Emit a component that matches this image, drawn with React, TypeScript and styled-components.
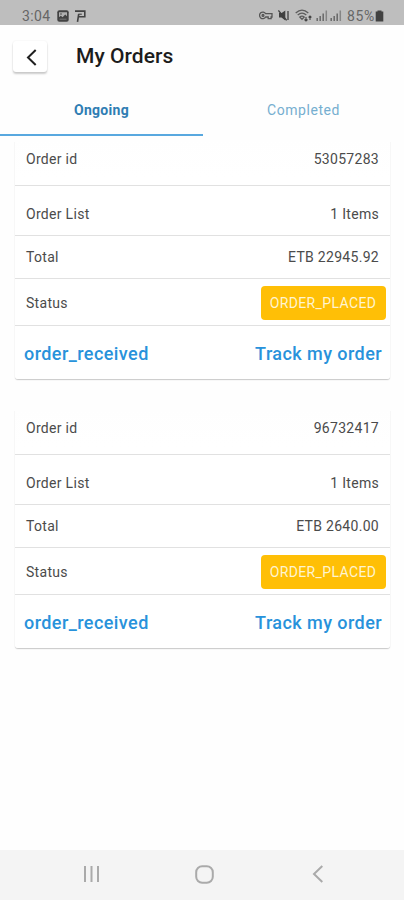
import React from "react";
import styled, { createGlobalStyle } from "styled-components";

const GlobalStyle = createGlobalStyle`
  * { box-sizing: border-box; }
  body { margin: 0; background: #fefefe; font-family: Roboto, sans-serif; }
  button { font-family: inherit; border: 0; background: none; padding: 0; }
`;

const Screen = styled.div`
  width: 404px;
  height: 900px;
  display: flex;
  flex-direction: column;
  background: #fefefe;
  overflow: hidden;
`;

const StatusBar = styled.div`
  height: 25px;
  flex: none;
  display: flex;
  justify-content: space-between;
  padding: 6px 20px 0 22px;
  background: #bebebe;
  color: #666;
  font-size: 14px;
  line-height: 20px;
`;

const StatusGroup = styled.div<{ $spacing: number }>`
  display: flex;
  align-items: center;
  height: 19px;
  letter-spacing: ${(p) => p.$spacing}px;
  svg { display: block; flex: none; }
`;

const Header = styled.header`
  height: 60px;
  flex: none;
  display: flex;
  align-items: flex-start;
  padding: 16px 13px 0;
`;

const BackButton = styled.button`
  width: 34px;
  height: 31px;
  display: flex;
  align-items: center;
  justify-content: center;
  border-radius: 3px;
  background: #fff;
  box-shadow: 0 2px 2px rgba(0, 0, 0, 0.2), 0 0 2px rgba(0, 0, 0, 0.07);
  svg { margin-left: 4px; margin-top: 2px; }
`;

const Title = styled.h1`
  margin: 0 0 0 29px;
  color: #1c1c1c;
  font-size: 21px;
  line-height: 31px;
  font-weight: 500;
  letter-spacing: 0.05px;
`;

const Tabs = styled.nav`
  height: 51px;
  flex: none;
  display: flex;
`;

const Tab = styled.button<{ $active?: boolean }>`
  width: ${(p) => (p.$active ? 203 : 201)}px;
  height: 51px;
  border-bottom: 2.5px solid ${(p) => (p.$active ? "#58a8df" : "transparent")};
  color: ${(p) => (p.$active ? "#2f7db3" : "#76aed0")};
  font-size: 14px;
  line-height: 48px;
  font-weight: ${(p) => (p.$active ? 700 : 400)};
  letter-spacing: ${(p) => (p.$active ? 0.3 : 0.55)}px;
`;

const OrderList = styled.main`
  flex: 1;
  display: flex;
  flex-direction: column;
  gap: 28px;
  padding: 2px 14px 0 15px;
`;

const Card = styled.section`
  height: 241px;
  flex: none;
  display: grid;
  grid-template-rows: 48px 50px 43px 47px 53px;
  background: linear-gradient(#fefefe, #fff 40px);
  border-radius: 3px;
  box-shadow: 0 1px 1px rgba(0, 0, 0, 0.17), 0 1px 2px rgba(0, 0, 0, 0.06);
  clip-path: inset(4px -3px -4px -3px);
`;

const Row = styled.div<{ $top?: number; $bottom?: number }>`
  display: flex;
  justify-content: space-between;
  align-items: center;
  padding: ${(p) => p.$top ?? 0}px 11px ${(p) => p.$bottom ?? 0}px;
  border-bottom: 1px solid #e1e1e1;
  color: #4b4b4b;
  font-size: 14px;
  line-height: 18px;
  letter-spacing: 0.3px;
`;

const Badge = styled.span`
  width: 125px;
  height: 34px;
  margin-right: -6.5px;
  border-radius: 4px;
  background: #ffbf06;
  color: #fff4d0;
  text-align: center;
  line-height: 34px;
  letter-spacing: 0.37px;
`;

const Actions = styled.div`
  display: flex;
  justify-content: space-between;
  align-items: center;
  padding: 2px 8px 0 9px;
`;

const Action = styled.button`
  color: #2892db;
  font-size: 18px;
  line-height: 24px;
  font-weight: 500;
  letter-spacing: 0.43px;
`;

const NavBar = styled.footer`
  height: 50px;
  flex: none;
  display: flex;
  align-items: center;
  padding: 0 80px 2px 83px;
  background: #f4f4f4;
`;

const PictureIcon = () => (
  <svg width="12" height="12" viewBox="0 0 12 12">
    <rect x=".3" y=".3" width="11.4" height="11.4" rx="2" fill="#424242" />
    <path d="M2 2.2h8v4L8.2 4.6 5.6 7.2 3.8 5.7 2 7.2Z" fill="#b0b0b0" />
    <path d="M2.5 9.2h7" stroke="#858585" strokeWidth=".8" />
    <circle cx="4" cy="4" r=".8" fill="#424242" />
  </svg>
);

const ParkingIcon = () => (
  <svg width="11" height="12" viewBox="0 0 11 12" fill="none" stroke="#424242">
    <path d="M0 1.1h9.8v5.7H3.1M2.5 11.8l1.2-7.7" strokeWidth="1.6" />
    <path d="M3.3 4.2h3.5" strokeWidth="1.1" />
  </svg>
);

const KeyIcon = () => (
  <svg width="14" height="9" viewBox="0 0 14 9" fill="none" stroke="#555" strokeWidth="1.3">
    <path d="M6.7 2.7A3.3 3.3 0 1 0 6.7 6h2.5v1.7h2.9V6H13V2.7Z" />
    <circle cx="4" cy="4.4" r=".9" />
  </svg>
);

const MuteIcon = () => (
  <svg width="12" height="11" viewBox="0 0 12 11">
    <path d="M1 3h2.6L7.3.5v10L3.5 7.6H1Z" fill="#404040" />
    <path d="M.4.4 8.7 10.3M10 1v9" stroke="#404040" strokeWidth="1.3" />
  </svg>
);

const WifiIcon = () => (
  <svg width="17" height="13" viewBox="0 0 17 13" fill="none" stroke="#5c5c5c" strokeWidth="1.3">
    <path d="M.7 4Q7 -1.7 13.3 4M2.7 6Q7 2.2 11.3 6M4.8 8Q7 6.3 9.2 8L7 10.4Z" />
    <path d="M11 8v4M9.5 10.5 11 12l1.5-1.5M15 11V7M13.6 8.5 15 7l1.4 1.5" stroke="#444" strokeWidth="1.1" />
  </svg>
);

const SignalIcon = () => (
  <svg width="12" height="11" viewBox="0 0 12 11" stroke="#686868" strokeWidth="1.5">
    <path d="M1.2 8v3M4.2 6v5M7.2 3.5V11" />
    <path d="M10.3.5V11" stroke="#858585" />
  </svg>
);

const BatteryIcon = () => (
  <svg width="9" height="12" viewBox="0 0 9 12">
    <path d="M2.5.5h4v1H8.3v10H.7v-10h1.8Z" fill="#424242" />
  </svg>
);

const Gap = styled.span<{ $w: number }>`
  width: ${(p) => p.$w}px;
  flex: none;
`;

const orders = [
  { id: "53057283", items: "1 Items", total: "ETB 22945.92" },
  { id: "96732417", items: "1 Items", total: "ETB 2640.00" },
];

export default function App() {
  return (
    <>
      <GlobalStyle />
      <Screen>
        <StatusBar>
          <StatusGroup $spacing={0.4}>
            <span>3:04</span>
            <Gap $w={6} />
            <PictureIcon />
            <Gap $w={6} />
            <ParkingIcon />
          </StatusGroup>
          <StatusGroup $spacing={0.7}>
            <KeyIcon />
            <Gap $w={5} />
            <MuteIcon />
            <Gap $w={5} />
            <WifiIcon />
            <Gap $w={4} />
            <SignalIcon />
            <Gap $w={2} />
            <SignalIcon />
            <Gap $w={5} />
            <span>85%</span>
            <BatteryIcon />
          </StatusGroup>
        </StatusBar>
        <Header>
          <BackButton aria-label="Back">
            <svg width="12" height="17" viewBox="0 0 12 17" fill="none" stroke="#202020" strokeWidth="2">
              <path d="M9.7 1 2 8.5 9.7 16" />
            </svg>
          </BackButton>
          <Title>My Orders</Title>
        </Header>
        <Tabs>
          <Tab $active>Ongoing</Tab>
          <Tab>Completed</Tab>
        </Tabs>
        <OrderList>
          {orders.map((order) => (
            <Card key={order.id}>
              <Row $bottom={5}>
                <span>Order id</span>
                <span>{order.id}</span>
              </Row>
              <Row $top={6}>
                <span>Order List</span>
                <span>{order.items}</span>
              </Row>
              <Row>
                <span>Total</span>
                <span>{order.total}</span>
              </Row>
              <Row $top={1}>
                <span>Status</span>
                <Badge>ORDER_PLACED</Badge>
              </Row>
              <Actions>
                <Action>order_received</Action>
                <Action>Track my order</Action>
              </Actions>
            </Card>
          ))}
        </OrderList>
        <NavBar>
          <svg width="17" height="18" viewBox="0 0 17 18" stroke="#aaa" strokeWidth="2">
            <path d="M2 1v16M8.5 1v16M15 1v16" />
          </svg>
          <Gap $w={95} />
          <svg width="19" height="19" viewBox="0 0 19 19" fill="none" stroke="#aaa" strokeWidth="2">
            <rect x="1.2" y="1.2" width="16.6" height="16.6" rx="6" />
          </svg>
          <Gap $w={98} />
          <svg width="12" height="18" viewBox="0 0 12 18" fill="none" stroke="#aaa" strokeWidth="2">
            <path d="M10.3 1 2 9l8.3 8" />
          </svg>
        </NavBar>
      </Screen>
    </>
  );
}
